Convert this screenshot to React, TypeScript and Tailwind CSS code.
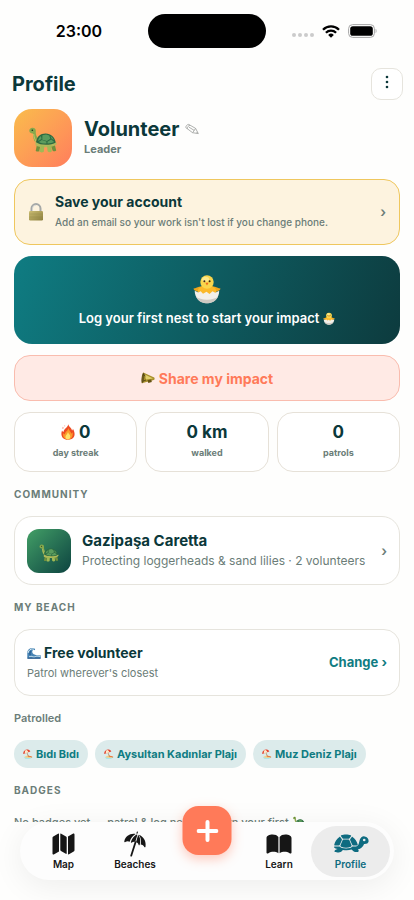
import { ReactNode } from 'react';

interface IconProps {
  className?: string;
}

function TurtleEmoji({ className }: IconProps) {
  return (
    <svg viewBox="0 0 28 26" className={className} aria-hidden="true">
      <path d="M.3 4C.2 2.200 1.500.9 3.400.7c1.900-.1 3.400 1.100 3.400 3-.1 2.700 0 4.900 1.700 6.900L6.200 15C4.500 12.800 4.100 9.500 4 6.400 2.200 6.600.4 5.700.3 4z" fill="#86a84c" />
      <path d="M4.700 7c.3 3 .8 5.500 3 8" fill="none" stroke="#c9c96c" strokeWidth=".9" />
      <path d="M8 17.500l-1.300 6.200c.9 1.200 3 1.200 3.700 0l1-6zM21.500 17.500l2.200 6.200c1 .8 3.100.6 3.500-.3l-1.700-7z" fill="#71903c" />
      <path d="M6.500 14.500c4.500 3.400 16.500 3.700 20.700.7l.6 1.800c-2.500 3.700-16.800 4.500-21.300 1.300z" fill="#b0b95c" />
      <path d="M7 15.300c.7-5.600 4.300-8.800 9.600-8.800 5.400 0 9.100 3.600 10.200 8.900-4.300 3.100-15.300 3.300-19.800-.1z" fill="#2c6b42" />
      <path d="M13.400 8.200l3.700-.8 3.100 1.200 1.100 3.200-3.400 2.200-4.600-1.300zM12 8.900l.5 3-3.300 2.100c.1-2.200 1.100-4 2.800-5.100zM9.900 15.100l2.900-2 4.600 1.500v2c-2.900.1-5.500-.3-7.500-1.500zM22.200 12.600l3 2.500c-1.600.9-4 1.400-6.600 1.500l-.2-1.900zM21.400 8.900c1.500 1 2.800 2.400 3.600 4.400l-2.500-1.800z" fill="#5b9c5e" />
      <path d="M11.600 18.500l-1.200 6c.9 1.200 3.700 1.200 4.500 0l.4-5.600zM18 18.800l.6 5.500c1 1.200 3.600 1.100 4.200-.1l-.7-5.700z" fill="#a0b955" />
      <circle cx="3.300" cy="3.200" r=".8" fill="#17301d" />
    </svg>
  );
}

function LockEmoji({ className }: IconProps) {
  return (
    <svg viewBox="0 0 16 18" className={className} aria-hidden="true">
      <defs>
        <linearGradient id="lock-body" x1="0" y1="0" x2="1" y2="1">
          <stop offset="0" stopColor="#cbbd72" />
          <stop offset="1" stopColor="#8d803f" />
        </linearGradient>
      </defs>
      <path d="M3.500 9V5.600a4.500 4.500 0 0 1 9 0V9" fill="none" stroke="#a5a8a7" strokeWidth="2" />
      <path d="M4.500 8V5.600a3.500 3.500 0 0 1 3.500-3.500" fill="none" stroke="#d3d6d5" strokeWidth=".8" />
      <rect x="1" y="8" width="14" height="9.500" rx="1.200" fill="url(#lock-body)" />
      <path d="M1.500 11h13M1.500 14h13" stroke="#8f8445" strokeWidth=".5" opacity=".6" />
    </svg>
  );
}

function ChickEmoji({ className }: IconProps) {
  return (
    <svg viewBox="0 0 28 30" className={className} aria-hidden="true">
      <path d="M5.500 17.500C3 17.700.7 16.300.5 14.600c1.900-.2 5.500-2.400 8.500-2h10c3-.4 6.600 1.800 8.500 2-.2 1.700-2.500 3.100-5 2.900z" fill="#efa51b" />
      <path d="M4.500 18c.2-4 4-7 9.500-7s9.300 3 9.500 7l-3 4h-13z" fill="#fbb92a" />
      <circle cx="14" cy="8" r="6.700" fill="#f9d64c" />
      <ellipse cx="12.600" cy="5.200" rx="3.600" ry="2.500" fill="#fdea8a" />
      <circle cx="11.400" cy="7.200" r="1" fill="#3b2416" />
      <circle cx="16.600" cy="7.200" r="1" fill="#3b2416" />
      <path d="M12.400 8.700h3.200L14 11.400z" fill="#ee6b1f" />
      <path d="M1.700 16.800l3.600 1.700 2.400-1.300 2.300 2.600 3.500-2 3 2.300 3-2.800 2.700 1.400 4-1.900c0 7.300-5 12.500-12.200 12.500S1.700 24 1.700 16.800z" fill="#f3f0ea" />
      <path d="M3 22.500c1.700 4.200 5.700 6.800 11 6.800s9.300-2.600 11-6.800c-4 4.200-18 4.200-22 0z" fill="#cfcac2" />
    </svg>
  );
}

function MegaphoneEmoji({ className }: IconProps) {
  return (
    <svg viewBox="0 0 14 12" className={className} aria-hidden="true">
      <path d="M2.300.6L13.200 5.600c.7.500.5 2.400-.4 2.500L.8 11.200z" fill="#a8902c" />
      <path d="M3.800 2.500l8.200 4.100-7 .9z" fill="#e2d06a" />
      <path d="M6.500 8.300l.8 2.600 3.500-.8-.6-2.500z" fill="#655313" />
      <ellipse cx="1.900" cy="5.900" rx="1.300" ry="5.300" fill="#6b5a1b" transform="rotate(8 1.900 5.900)" />
      <path d="M1.800 2.300L4.500 4M1.500 9.300L5 8" stroke="#3c340f" strokeWidth=".7" />
    </svg>
  );
}

function FireEmoji({ className }: IconProps) {
  return (
    <svg viewBox="0 0 14 16" className={className} aria-hidden="true">
      <path d="M7.300.3c.3 2.500 3.400 3.700 3.800 6.200.6-.4.8-1.100.8-1.800 3.200 5.200 2 11-4.800 11.100C1.100 15.800-.7 11.100 1 6.500c.4.900.8 1.300 1.500 1.600C2.700 4.900 6.600 3.800 7.300.3z" fill="#ee4b23" />
      <path d="M7.300 4c.5 2.300 2.800 3.500 2.900 5.700l1.400-1.400c.7 4.300-1.300 7.100-4.600 7.200-3.800-.1-5.400-2.900-4.800-6.200l1.600 1.200C4 7.700 6.900 7 7.300 4z" fill="#fb9a2a" />
      <path d="M7 8c.3 1.800 2.500 2.600 2.300 4.800-.2 1.700-1.200 2.600-2.400 2.600-1.600 0-2.700-1.200-2.400-2.900C4.800 11 6.600 10 7 8z" fill="#ffe36b" />
      <path d="M1.800 2.700l.8 1.400-1 .9zM3.600 1.200l.7.900-.7.500z" fill="#ee4b23" />
    </svg>
  );
}

function WaveEmoji({ className }: IconProps) {
  return (
    <svg viewBox="0 0 14 12" className={className} aria-hidden="true">
      <path d="M.3 11.500V5C1 2 3.500.6 7 1.200c1.200.3 1.500 1.600.7 2-1.200-.6-2.200 0-2.400 1.100C4.900 7 8 8.700 13.700 8.200v3.300z" fill="#4683b4" />
      <path d="M1 6C1.600 3 3.600 1.500 7 2M2 9.500c1 .6 2-.6 3 0s2.500.6 3.600 0 2.600-.2 4.600-.2" fill="none" stroke="#d9ebf3" strokeWidth="1" />
      <path d="M3.200 8C2.500 6.600 3 5 4 4.200M.5 11.200h13" fill="none" stroke="#1f4d83" strokeWidth="1" />
    </svg>
  );
}

function BeachEmoji({ className }: IconProps) {
  return (
    <svg viewBox="0 0 12 12" className={className} aria-hidden="true">
      <path d="M1.500 9.600c2.300-1.700 6.500-2 10-.1-1.500 1.500-8 1.600-10 .1z" fill="#f4cf87" />
      <path d="M1.200 10.100c2.500.8 7.500.8 10.300-.3-.8 1.800-9 2.600-10.300.3z" fill="#7fe0e4" />
      <path d="M4.400 3.600l2.200 5.600" stroke="#b08a55" strokeWidth=".9" />
      <path d="M.4 6C-.3 3 2.500.2 5.400.5c2 .2 3.200 1.500 3.400 2.600z" fill="#e4402c" />
      <path d="M2.300 5.300C1.900 3.700 2.300 2 3.600.8c1.500.4 2.500 1.700 2.900 3.100z" fill="#fbe9c8" />
      <path d="M6 7.700l5 1.600-.5 1L5.600 8.700z" fill="#e8632f" />
    </svg>
  );
}

function PencilEmoji({ className }: IconProps) {
  return (
    <svg viewBox="0 0 14 12" className={className} aria-hidden="true" fill="none" stroke="#9a9d9b" strokeWidth=".8" strokeLinejoin="round">
      <path d="M.8 4.600C.8 3 2 1.500 3.700 1.400l6.900 4 2.700 5.200-5.700-.9z" />
      <path d="M2.300 5.800C2.300 4 3.300 2.600 5 2.200M3.900 4.100l5.300 3.300M7.600 9.700l3-4.300M11.500 10.200l.9-1.200" />
    </svg>
  );
}

function MapIcon({ className }: IconProps) {
  return (
    <svg viewBox="0 0 23 22" className={className} aria-hidden="true" fill="currentColor">
      <path d="M7 1.100v17.400l-4.800 2.800c-.9.500-1.700.1-1.700-.9V4.700c0-.6.300-1 .8-1.300L6 .7c.5-.300 1-.100 1 .4z" />
      <path d="M8.300 1.100c0-.5.400-.7.900-.4l4.800 2.700c.5.300.7.700.7 1.200v15.700c0 .6-.4.800-.9.500L9 18c-.5-.3-.7-.6-.7-1.200z" />
      <path d="M16 20.900V3.500L20.800.7c.9-.5 1.700-.1 1.700.9v15.700c0 .6-.3 1-.8 1.300L17 21.300c-.5.300-1 .1-1-.4z" />
    </svg>
  );
}

function UmbrellaIcon({ className }: IconProps) {
  return (
    <svg viewBox="0 0 24 26" className={className} aria-hidden="true" fill="currentColor">
      <path d="M13.300 2.400l.5-1.500c.2-.7 1.300-.4 1.100.4l-.5 1.500z" />
      <path d="M12.600 3C7.400 2 2.500 5 1.300 10.300c-.2.800.5 1.100 1 .7 1.300-1 2.900-1.100 4.400-.3C7.700 7.400 9.600 4.700 12.600 3z" />
      <path d="M13.500 3.400C10.700 5 8.800 7.600 7.900 11c-.2.700.4 1 .9.600 1-.8 2.200-1 3.400-.6l2.200-7.300z" />
      <path d="M15.200 3.800L13 11.300c1.300.3 2.200 1.200 2.600 2.400.2.700.9.700 1.100 0 1.100-3.600.7-7.200-1.500-9.900z" />
      <path d="M15.800 3.700c2.200 2.900 2.700 6.200 1.900 9.700 1.700.2 3 1.100 3.600 2.500.3.600 1.100.6 1.200-.2.900-5.400-1.700-10-6.700-12z" />
      <path d="M12.500 11.200l-4.300 13.500" fill="none" stroke="currentColor" strokeWidth="1.800" strokeLinecap="round" />
    </svg>
  );
}

function BookIcon({ className }: IconProps) {
  return (
    <svg viewBox="0 0 26 20" className={className} aria-hidden="true" fill="currentColor">
      <path d="M12.400 3v16.300c-2.900-1.900-7-2-10 0-.9.500-1.900.2-1.900-.9V4C.5 2 3.200.5 6.600.5c2.500 0 4.700.8 5.800 2.500z" />
      <path d="M13.600 3v16.300c2.900-1.900 7-2 10 0 .9.500 1.900.2 1.900-.9V4c0-2-2.700-3.500-6.100-3.500-2.500 0-4.700.8-5.800 2.500z" />
    </svg>
  );
}

function TortoiseIcon({ className }: IconProps) {
  return (
    <svg viewBox="0 0 36 19" className={className} aria-hidden="true" fill="currentColor">
      {/* Shell plates */}
      <path d="M8.200 1.300C10.700.2 15.300.2 17.800 1.300c.4.200.5.500.2.900l-1.500 2c-.3.400-.7.500-1.100.5h-4.800c-.4 0-.8-.1-1.100-.5L8 2.200c-.3-.4-.2-.7.200-.9z" />
      <path d="M7.200 3l1.500 2.100c.2.300.3.700.1 1.100l-2 4.500c-.2.500-.6.800-1.100.8H2.100c-.7 0-1-.4-.8-1.100C2.100 7.400 3.900 4.600 6.400 2.900c.300-.2.600-.2.800.1z" />
      <path d="M18.800 3l-1.500 2.100c-.2.300-.3.700-.1 1.100l2 4.500c.2.500.6.800 1.100.8h3.600c.7 0 1-.4.800-1.100-.8-3-2.600-5.800-5.100-7.500-.3-.2-.6-.2-.8.100z" />
      <path d="M10.600 5.600h4.800c.5 0 .8.200 1 .7l2.100 5c.2.600 0 1.100-.7 1.400-2.900 1.300-6.700 1.300-9.600 0-.7-.3-.9-.8-.7-1.400l2.100-5c.2-.5.500-.7 1-.7z" />
      {/* Belly, feet and head */}
      <path d="M2 12.500h4.500c1.500 2.600 11.500 2.700 13 0h3.300c3 0 3.200-3.900 3.900-6.400.8-2.700 2.700-4 4.800-3.700 2.900.4 4.400 2.600 4.100 5-.3 1.800-2.100 2.600-4.500 2.500-1.200 2.900-3 4.900-6.300 5.600 1 .6 1.200 1.400.7 2-.6.700-3.600.7-4.700-.1l-2.300-1.800c-2.700.9-5.800 1-8.600.3L8.200 17.700c-1.300.9-6 .9-6.600.1-.5-.9.600-2.100 3.100-2.700-1.700-.2-2.900-.7-3.500-1.500-.4-.5 0-1.100.8-1.100z" />
      <circle cx="31.200" cy="6" r="1.300" fill="#ececec" />
    </svg>
  );
}

function StatusBar() {
  return (
    <div className="grid h-[62px] shrink-0 grid-cols-[1fr_118px_1fr] items-center text-black">
      <span className="pl-2.5 text-center text-[16px] font-semibold">23:00</span>
      <div className="h-[34px] rounded-full bg-black" />
      <div className="flex items-center justify-center gap-2 pr-3">
        <div className="flex gap-0.5 pt-2">
          {[0, 1, 2, 3].map((dot) => (
            <span key={dot} className="size-1 rounded-full bg-[#cbcbcb]" />
          ))}
        </div>
        <svg viewBox="0 0 18 13" className="h-[13px] w-[18px]" aria-hidden="true" fill="none" stroke="#000" strokeWidth="2.300">
          <path d="M1 4.700a11.400 11.400 0 0 1 16 0M3.900 7.700a7.300 7.300 0 0 1 10.200 0" />
          <path d="M9 12.700L6.200 9.900a4 4 0 0 1 5.600 0z" fill="#000" stroke="none" />
        </svg>
        <svg viewBox="0 0 29 14" className="h-[14px] w-[29px]" aria-hidden="true">
          <rect x=".6" y=".6" width="25.800" height="12.800" rx="4" fill="none" stroke="#a6a6a6" />
          <rect x="2.200" y="2.200" width="22.600" height="9.600" rx="2.600" />
          <path d="M27.600 4.800c1.200.5 1.200 3.900 0 4.400z" fill="#a6a6a6" />
        </svg>
      </div>
    </div>
  );
}

function SectionTitle({ children }: { children: ReactNode }) {
  return <h2 className="py-3.5 text-[10px] leading-4 font-bold tracking-widest text-[#6b7d78] uppercase">{children}</h2>;
}

const stats = [
  { value: '0', label: 'day streak', fire: true },
  { value: '0 km', label: 'walked' },
  { value: '0', label: 'patrols' },
];

const beaches = ['Bıdı Bıdı', 'Aysultan Kadınlar Plajı', 'Muz Deniz Plajı'];

function NavItem({ label, active, children }: { label: string; active?: boolean; children: ReactNode }) {
  return (
    <a
      href="#"
      className={`flex h-[51px] flex-col items-center justify-end rounded-full pb-1.5 text-[10px] leading-[14px] font-semibold ${
        active ? 'bg-[#ececec] text-[#0e6b80]' : 'text-[#161616]'
      }`}
    >
      <span className="flex h-[26px] items-center">{children}</span>
      {label}
    </a>
  );
}

function BottomNav() {
  return (
    <footer className="h-[78px] shrink-0 px-5">
      <nav className="relative grid h-[58px] grid-cols-[79px_64px_1fr_64px_79px] items-center rounded-full bg-[#fdfdfd] px-1 shadow-[0_6px_32px_rgba(0,0,0,0.07)]">
        <NavItem label="Map">
          <MapIcon className="h-[22px] w-[23px]" />
        </NavItem>
        <NavItem label="Beaches">
          <UmbrellaIcon className="h-[26px] w-6" />
        </NavItem>
        <button
          aria-label="Add"
          className="absolute -top-4 left-1/2 flex size-[49px] -translate-x-1/2 items-center justify-center rounded-2xl bg-[#ff7a59] shadow-[0_4px_12px_rgba(255,122,89,0.4)]"
        >
          <svg viewBox="0 0 22 22" className="size-[22px]" aria-hidden="true">
            <path d="M11 2v18M2 11h18" stroke="#fff" strokeWidth="4" strokeLinecap="round" />
          </svg>
        </button>
        <span />
        <NavItem label="Learn">
          <BookIcon className="h-5 w-[26px]" />
        </NavItem>
        <NavItem label="Profile" active>
          <TortoiseIcon className="h-[19px] w-9" />
        </NavItem>
      </nav>
    </footer>
  );
}

export default function App() {
  return (
    <div className="flex h-screen flex-col overflow-hidden bg-[#fefefd] font-['Inter',sans-serif] text-[#0b383a]">
      <StatusBar />

      <header className="flex shrink-0 items-center justify-between pt-1.5 pr-[11px] pl-3">
        <h1 className="text-[20px] leading-8 font-bold">Profile</h1>
        <button aria-label="More options" className="flex size-8 items-center justify-center rounded-[10px] border border-[#e6e4dd] bg-white">
          <svg viewBox="0 0 4 16" className="mb-1 h-4 w-1" aria-hidden="true" fill="currentColor">
            <circle cx="2" cy="3" r="1.300" />
            <circle cx="2" cy="8" r="1.300" />
            <circle cx="2" cy="13" r="1.300" />
          </svg>
        </button>
      </header>

      <main className="min-h-0 flex-1 overflow-hidden px-3.5 pt-[9px]">
        {/* Identity */}
        <div className="flex items-center gap-3">
          <div className="flex size-[58px] items-center justify-center rounded-[18px] bg-linear-to-br from-[#f9bc4b] to-[#ff7d5c]">
            <TurtleEmoji className="mt-1 h-[26px] w-7" />
          </div>
          <div className="pb-0.5">
            <div className="flex items-center gap-1.5">
              <span className="text-[20px] leading-6 font-bold">Volunteer</span>
              <button aria-label="Edit name">
                <PencilEmoji className="h-3 w-3.5" />
              </button>
            </div>
            <p className="text-[11px] leading-4 font-bold text-[#6b7d78]">Leader</p>
          </div>
        </div>

        <button className="mt-3 flex h-[66px] w-full items-center rounded-2xl border border-[#efc75e] bg-[#fdf3df] px-[13px] text-left">
          <LockEmoji className="h-[18px] w-4" />
          <span className="ml-[11px] flex-1 pb-0.5">
            <span className="block text-[14px] leading-5 font-bold">Save your account</span>
            <span className="mt-0.5 block text-[10px] leading-4 font-medium text-[#6b7d78]">
              Add an email so your work isn't lost if you change phone.
            </span>
          </span>
          <span className="text-[14px] leading-5 font-semibold text-[#6b7d78]">›</span>
        </button>

        <section className="mt-[11px] flex h-[88px] flex-col items-center rounded-[18px] bg-linear-[110deg] from-[#0f7c82] to-[#0d3b3e] pt-[18px]">
          <ChickEmoji className="h-[30px] w-7" />
          <p className="mt-1 flex items-center gap-1 text-[13px] leading-5 font-semibold text-white">
            Log your first nest to start your impact
            <ChickEmoji className="h-[13px] w-3" />
          </p>
        </section>

        <button className="mt-[11px] flex h-[46px] w-full items-center justify-center gap-1 rounded-2xl border border-[#f9bcae] bg-[#ffeae5] text-[14px] font-bold text-[#ff7a59]">
          <MegaphoneEmoji className="h-3 w-3.5" />
          Share my impact
        </button>

        <div className="mt-[11px] grid grid-cols-3 gap-2">
          {stats.map((stat) => (
            <div key={stat.label} className="flex h-[60px] flex-col items-center rounded-2xl border border-[#e6e1d8] bg-white pt-2">
              <span className="flex items-center gap-1 text-[17px] leading-[22px] font-bold">
                {stat.fire && <FireEmoji className="h-4 w-3.5" />}
                {stat.value}
              </span>
              <span className="mt-0.5 text-[9px] leading-4 font-bold text-[#6b7d78]">{stat.label}</span>
            </div>
          ))}
        </div>

        <SectionTitle>Community</SectionTitle>
        <a href="#" className="flex h-[69px] items-center rounded-[18px] border border-[#e6e4dd] bg-white px-3">
          <span className="flex size-11 items-center justify-center rounded-xl bg-linear-to-br from-[#43a066] to-[#0d4440]">
            <TurtleEmoji className="mt-1 h-[18px] w-5" />
          </span>
          <span className="ml-[11px] flex-1 pb-0.5">
            <span className="block text-[15px] leading-5 font-bold">Gazipaşa Caretta</span>
            <span className="mt-0.5 block text-[12px] leading-4 text-[#6b7d78]">Protecting loggerheads &amp; sand lilies · 2 volunteers</span>
          </span>
          <span className="text-[14px] leading-5 font-semibold text-[#6b7d78]">›</span>
        </a>

        <SectionTitle>My beach</SectionTitle>
        <div className="flex h-[67px] items-center justify-between rounded-2xl border border-[#e6e4dd] bg-white px-3">
          <div className="pb-0.5">
            <p className="flex items-center gap-[3px] text-[14px] leading-5 font-bold">
              <WaveEmoji className="h-3 w-3.5" />
              Free volunteer
            </p>
            <p className="mt-0.5 text-[11px] leading-4 text-[#6b7d78]">Patrol wherever's closest</p>
          </div>
          <button className="text-[13px] font-bold text-[#0f7c82]">Change ›</button>
        </div>

        <h3 className="py-3.5 text-[11px] leading-4 font-semibold text-[#6b7d78]">Patrolled</h3>
        <div className="flex gap-[7px]">
          {beaches.map((beach) => (
            <span key={beach} className="flex h-7 items-center gap-[3px] rounded-full bg-[#dcebeb] px-[9px] text-[11px] font-bold whitespace-nowrap text-[#0f7c82]">
              <BeachEmoji className="size-2.5" />
              {beach}
            </span>
          ))}
        </div>

        <SectionTitle>Badges</SectionTitle>
        <p className="flex items-center gap-1 pt-0.5 text-[11px] leading-4 font-medium whitespace-nowrap text-[#6b7d78]">
          No badges yet — patrol &amp; log nests to earn your first
          <TurtleEmoji className="h-3 w-3" />
        </p>
      </main>

      <BottomNav />
    </div>
  );
}
